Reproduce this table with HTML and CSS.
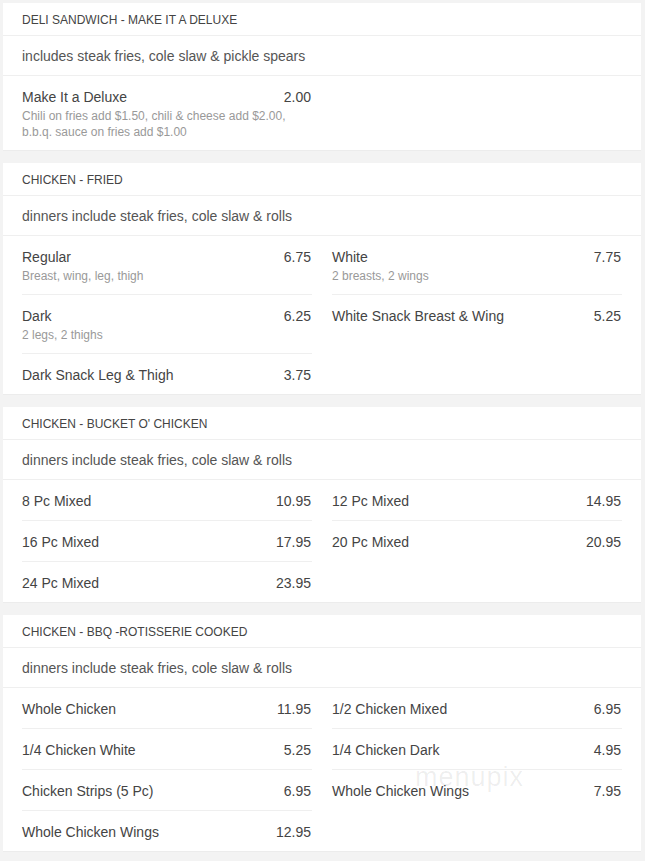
FILE: index.html
```html
<!DOCTYPE html>
<html lang="en">
<head>
  <meta charset="UTF-8" />
  <meta name="viewport" content="width=device-width, initial-scale=1.0"/>
  <title>Menu</title>
  <link rel="stylesheet" href="styles.css">
</head>
<body>
  <div class="menu">

    <!-- Deli sandwich -->
    <section class="section">
      <h2 class="section-title">DELI SANDWICH - MAKE IT A DELUXE</h2>
      <p class="section-desc">includes steak fries, cole slaw &amp; pickle spears</p>
      <div class="items">
        <div class="col">
          <div class="item">
            <div class="item-row"><span class="name">Make It a Deluxe</span><span class="price">2.00</span></div>
            <div class="item-desc">Chili on fries add $1.50, chili &amp; cheese add $2.00, b.b.q. sauce on fries add $1.00</div>
          </div>
        </div>
        <div class="col"></div>
      </div>
    </section>

    <!-- Fried chicken -->
    <section class="section">
      <h2 class="section-title">CHICKEN - FRIED</h2>
      <p class="section-desc">dinners include steak fries, cole slaw &amp; rolls</p>
      <div class="items">
        <div class="col">
          <div class="item">
            <div class="item-row"><span class="name">Regular</span><span class="price">6.75</span></div>
            <div class="item-desc">Breast, wing, leg, thigh</div>
          </div>
          <div class="item">
            <div class="item-row"><span class="name">Dark</span><span class="price">6.25</span></div>
            <div class="item-desc">2 legs, 2 thighs</div>
          </div>
          <div class="item">
            <div class="item-row"><span class="name">Dark Snack Leg &amp; Thigh</span><span class="price">3.75</span></div>
          </div>
        </div>
        <div class="col">
          <div class="item">
            <div class="item-row"><span class="name">White</span><span class="price">7.75</span></div>
            <div class="item-desc">2 breasts, 2 wings</div>
          </div>
          <div class="item">
            <div class="item-row"><span class="name">White Snack Breast &amp; Wing</span><span class="price">5.25</span></div>
          </div>
        </div>
      </div>
    </section>

    <!-- Bucket -->
    <section class="section">
      <h2 class="section-title">CHICKEN - BUCKET O' CHICKEN</h2>
      <p class="section-desc">dinners include steak fries, cole slaw &amp; rolls</p>
      <div class="items">
        <div class="col">
          <div class="item">
            <div class="item-row"><span class="name">8 Pc Mixed</span><span class="price">10.95</span></div>
          </div>
          <div class="item">
            <div class="item-row"><span class="name">16 Pc Mixed</span><span class="price">17.95</span></div>
          </div>
          <div class="item">
            <div class="item-row"><span class="name">24 Pc Mixed</span><span class="price">23.95</span></div>
          </div>
        </div>
        <div class="col">
          <div class="item">
            <div class="item-row"><span class="name">12 Pc Mixed</span><span class="price">14.95</span></div>
          </div>
          <div class="item">
            <div class="item-row"><span class="name">20 Pc Mixed</span><span class="price">20.95</span></div>
          </div>
        </div>
      </div>
    </section>

    <!-- BBQ -->
    <section class="section">
      <h2 class="section-title">CHICKEN - BBQ -ROTISSERIE COOKED</h2>
      <p class="section-desc">dinners include steak fries, cole slaw &amp; rolls</p>
      <div class="items">
        <div class="col">
          <div class="item">
            <div class="item-row"><span class="name">Whole Chicken</span><span class="price">11.95</span></div>
          </div>
          <div class="item">
            <div class="item-row"><span class="name">1/4 Chicken White</span><span class="price">5.25</span></div>
          </div>
          <div class="item">
            <div class="item-row"><span class="name">Chicken Strips (5 Pc)</span><span class="price">6.95</span></div>
          </div>
          <div class="item">
            <div class="item-row"><span class="name">Whole Chicken Wings</span><span class="price">12.95</span></div>
          </div>
        </div>
        <div class="col">
          <div class="item">
            <div class="item-row"><span class="name">1/2 Chicken Mixed</span><span class="price">6.95</span></div>
          </div>
          <div class="item">
            <div class="item-row"><span class="name">1/4 Chicken Dark</span><span class="price">4.95</span></div>
          </div>
          <div class="item">
            <div class="item-row"><span class="name">Whole Chicken Wings</span><span class="price">7.95</span></div>
          </div>
        </div>
      </div>
      <span class="watermark">menupix</span>
    </section>

  </div>
</body>
</html>
```

FILE: styles.css
```css
body {
  margin: 0;
  background: #f3f3f3;
  font-family: "Liberation Sans", Arial, sans-serif;
  color: #444;
}
.menu {
  display: flex;
  flex-direction: column;
  gap: 12px;
  padding: 3px 4px 9px 3px;
}
.section {
  position: relative;
  background: #fff;
  border-bottom: 1px solid #ececec;
}
.section-title {
  margin: 0;
  height: 31px;
  line-height: 32px;
  padding: 1px 19px 0;
  font-size: 12px;
  font-weight: normal;
  color: #444;
  border-bottom: 1px solid #efefef;
}
.section-desc {
  margin: 0;
  height: 38px;
  line-height: 39px;
  padding: 1px 19px 0;
  font-size: 14px;
  color: #555;
  border-bottom: 1px solid #efefef;
}
.items {
  display: grid;
  grid-template-columns: 290px 290px;
  column-gap: 20px;
  padding: 0 19px;
}
.item {
  padding: 13px 0 10px;
}
.item + .item {
  border-top: 1px solid #efefef;
}
.item-row {
  display: flex;
  justify-content: space-between;
  font-size: 14px;
  line-height: 17px;
  color: #444;
}
.price {
  padding-right: 1px;
}
.item-desc {
  margin-top: 2px;
  font-size: 12px;
  line-height: 16px;
  color: #999;
}
.watermark {
  position: absolute;
  left: 412px;
  top: 147px;
  font-size: 27px;
  letter-spacing: 1px;
  color: rgba(0, 0, 0, 0.07);
  pointer-events: none;
}
```
